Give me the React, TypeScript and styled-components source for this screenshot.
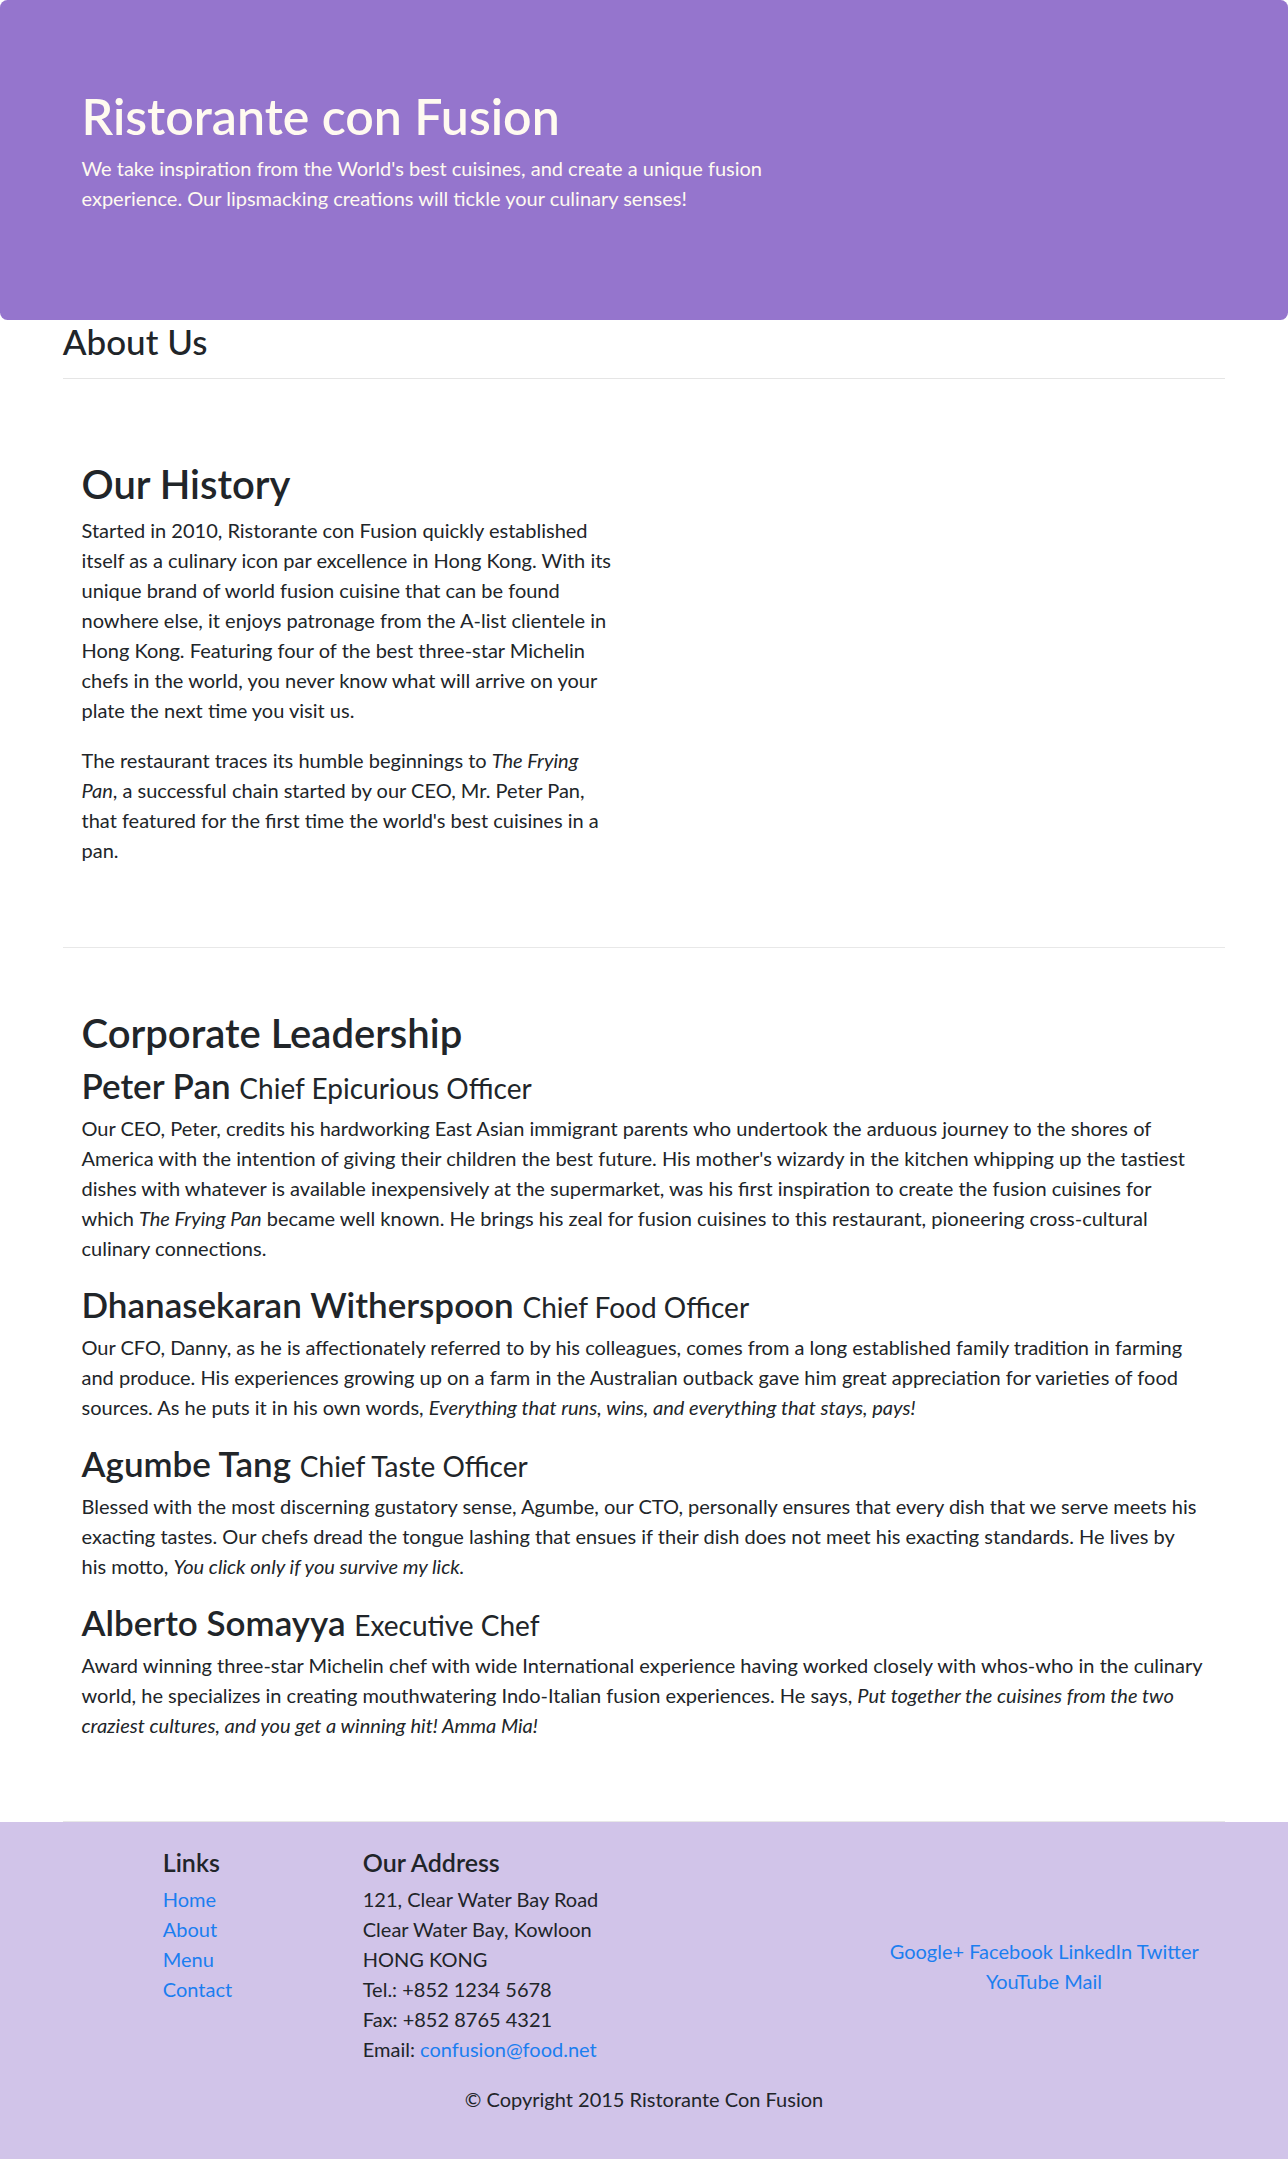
import React from 'react';
import styled, { createGlobalStyle } from 'styled-components';

const GlobalStyle = createGlobalStyle`
  body {
    margin: 0;
    background: #fff;
    color: #212529;
    font-family: Lato, 'Liberation Sans', sans-serif;
    font-size: 20px;
    line-height: 30px;
  }
  h1, h2, h3, h4, h5, p, ul {
    margin: 0;
  }
`;

const Jumbotron = styled.header`
  background-color: #9575cd;
  color: floralwhite;
  border-radius: 7.5px;
  padding: 86px 0 87px;
`;

const Container = styled.div`
  box-sizing: border-box;
  width: 1200px;
  margin: 0 auto;
  padding: 0 18.75px;
`;

const HeaderCol = styled.div`
  width: 737.5px;
  padding-left: 18.75px;
`;

const Title = styled.h1`
  font-size: 50px;
  line-height: 1.2;
  font-weight: 600;
  margin-bottom: 7px;
`;

const Lead = styled.p`
  margin-bottom: 20px;
`;

const PageTitle = styled.h3`
  font-size: 35px;
  line-height: 1.2;
  font-weight: 500;
`;

const Rule = styled.hr`
  height: 0;
  border: 0;
  border-top: 1px solid rgba(0, 0, 0, 0.1);
  margin: 16px 0 20px;
`;

const RowContent = styled.section<{ $split?: boolean }>`
  display: grid;
  grid-template-columns: ${p => (p.$split ? '1fr 1fr' : '1fr')};
  padding: 61px 0 61.5px;
  border-bottom: 1px solid #e8e8e8;
`;

const Col = styled.div`
  padding: 0 18.75px;
`;

const HistoryCol = styled(Col)`
  padding-right: 28px;
`;

const SectionTitle = styled.h2`
  font-size: 40px;
  line-height: 1.2;
  font-weight: 600;
  margin-bottom: 7px;
`;

const Para = styled.p`
  margin-bottom: 20px;
`;

const MemberName = styled.h3`
  font-size: 35px;
  line-height: 1.2;
  font-weight: 600;
  margin-bottom: 7px;

  small {
    font-size: 28px;
    font-weight: 400;
  }
`;

const Footer = styled.footer`
  background-color: #d1c4e9;
  padding: 25px 0;
`;

const FooterRow = styled.div`
  box-sizing: border-box;
  display: grid;
  grid-template-columns: 200px 500px 400px;
  width: 1200px;
  margin: 0 auto;
  padding-left: 100px;
`;

const FooterCol = styled.div<{ $center?: boolean }>`
  padding: 0 18.75px;
  align-self: ${p => (p.$center ? 'center' : 'start')};
  text-align: ${p => (p.$center ? 'center' : 'left')};
`;

const FooterHeading = styled.h5`
  font-size: 25px;
  line-height: 1.2;
  font-weight: 600;
  margin-bottom: 7px;
`;

const LinkList = styled.ul`
  list-style: none;
  padding: 0;
`;

const A = styled.a`
  color: #1b7ef0;
  text-decoration: none;
`;

const Address = styled.address`
  font-style: normal;
  margin-bottom: 20px;
`;

const Copyright = styled.p`
  text-align: center;
  margin-bottom: 20px;
`;

const leaders = [
  {
    name: 'Peter Pan',
    role: 'Chief Epicurious Officer',
    text: (
      <>
        Our CEO, Peter, credits his hardworking East Asian immigrant parents who undertook the arduous journey to the shores
        of America with the intention of giving their children the best future. His mother's wizardy in the kitchen
        whipping up the tastiest dishes with whatever is available inexpensively at the supermarket, was his first
        inspiration to create the fusion cuisines for which <em>The Frying Pan</em> became well known. He brings his zeal
        for fusion cuisines to this restaurant, pioneering cross-cultural culinary connections.
      </>
    ),
  },
  {
    name: 'Dhanasekaran Witherspoon',
    role: 'Chief Food Officer',
    text: (
      <>
        Our CFO, Danny, as he is affectionately referred to by his colleagues, comes from a long established family
        tradition in farming and produce. His experiences growing up on a farm in the Australian outback gave him great
        appreciation for varieties of food sources. As he puts it in his own words,{' '}
        <em>Everything that runs, wins, and everything that stays, pays!</em>
      </>
    ),
  },
  {
    name: 'Agumbe Tang',
    role: 'Chief Taste Officer',
    text: (
      <>
        Blessed with the most discerning gustatory sense, Agumbe, our CTO, personally ensures that every dish that we
        serve meets his exacting tastes. Our chefs dread the tongue lashing that ensues if their dish does not meet his
        exacting standards. He lives by his{'\u00a0'}motto, <em>You click only if you survive my lick.</em>
      </>
    ),
  },
  {
    name: 'Alberto Somayya',
    role: 'Executive Chef',
    text: (
      <>
        Award winning three-star Michelin chef with wide International experience having worked closely with whos-who in
        the culinary world, he specializes in creating mouthwatering Indo-Italian fusion experiences. He says,{' '}
        <em>Put together the cuisines from the two craziest cultures, and you get a winning hit! Amma Mia!</em>
      </>
    ),
  },
];

const social = ['Google+', 'Facebook', 'LinkedIn', 'Twitter', 'YouTube', 'Mail'];

export default function App() {
  return (
    <>
      <GlobalStyle />
      <Jumbotron>
        <Container>
          <HeaderCol>
            <Title>Ristorante con Fusion</Title>
            <Lead>
              We take inspiration from the World's best cuisines, and create a unique fusion experience. Our lipsmacking
              creations will tickle your culinary senses!
            </Lead>
          </HeaderCol>
        </Container>
      </Jumbotron>

      <Container>
        <PageTitle>About Us</PageTitle>
        <Rule />

        <RowContent $split>
          <HistoryCol>
            <SectionTitle>Our History</SectionTitle>
            <Para>
              Started in 2010, Ristorante con Fusion quickly established itself as a culinary icon par excellence in Hong
              Kong. With its unique brand of world fusion cuisine that can be found nowhere else, it enjoys patronage from
              the A-list clientele in Hong Kong. Featuring four of the best three-star Michelin chefs in the world, you
              never know what will arrive on your plate the next time you visit us.
            </Para>
            <Para>
              The restaurant traces its humble beginnings to <em>The Frying Pan</em>, a successful chain started by our
              CEO, Mr. Peter Pan, that featured for the first time the world's best cuisines in a pan.
            </Para>
          </HistoryCol>
          <Col />
        </RowContent>

        <RowContent>
          <Col>
            <SectionTitle>Corporate Leadership</SectionTitle>
            {leaders.map(l => (
              <div key={l.name}>
                <MemberName>
                  {l.name} <small>{l.role}</small>
                </MemberName>
                <Para>{l.text}</Para>
              </div>
            ))}
          </Col>
        </RowContent>
      </Container>

      <Footer>
        <FooterRow>
          <FooterCol>
            <FooterHeading>Links</FooterHeading>
            <LinkList>
              {['Home', 'About', 'Menu', 'Contact'].map(l => (
                <li key={l}>
                  <A href="#">{l}</A>
                </li>
              ))}
            </LinkList>
          </FooterCol>
          <FooterCol>
            <FooterHeading>Our Address</FooterHeading>
            <Address>
              121, Clear Water Bay Road
              <br />
              Clear Water Bay, Kowloon
              <br />
              HONG KONG
              <br />
              Tel.: +852 1234 5678
              <br />
              Fax: +852 8765 4321
              <br />
              Email: <A href="mailto:confusion@food.net">confusion@food.net</A>
            </Address>
          </FooterCol>
          <FooterCol $center>
            {social.map((s, i) => (
              <React.Fragment key={s}>
                <A href="#">{s}</A>
                {i < social.length - 1 ? ' ' : ''}
              </React.Fragment>
            ))}
          </FooterCol>
        </FooterRow>
        <Copyright>© Copyright 2015 Ristorante Con Fusion</Copyright>
      </Footer>
    </>
  );
}
